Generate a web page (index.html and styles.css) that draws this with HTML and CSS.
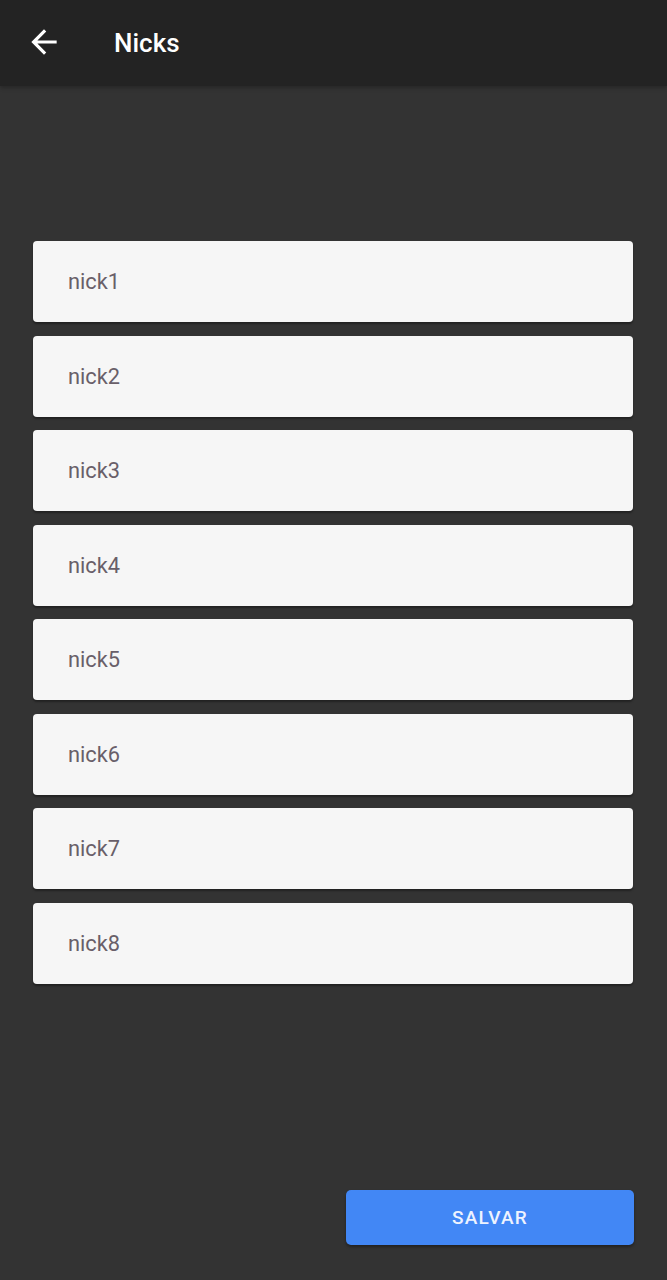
FILE: index.html
```html
<!DOCTYPE html>
<html>
<head>
<meta charset="utf-8">
<link rel="stylesheet" href="styles.css">
</head>
<body>
<div class="app">
  <header class="topbar">
    <button class="back" aria-label="Voltar">
      <svg width="38" height="38" viewBox="0 0 24 24"><path d="M20 11H7.83l5.59-5.59L12 4l-8 8 8 8 1.41-1.41L7.83 13H20v-2z" fill="#fff"/></svg>
    </button>
    <h1 class="title">Nicks</h1>
  </header>
  <main class="content">
    <ul class="list">
      <li class="field">nick1</li>
      <li class="field">nick2</li>
      <li class="field">nick3</li>
      <li class="field">nick4</li>
      <li class="field">nick5</li>
      <li class="field">nick6</li>
      <li class="field">nick7</li>
      <li class="field">nick8</li>
    </ul>
    <div class="actions">
      <button class="save">SALVAR</button>
    </div>
  </main>
</div>
</body>
</html>
```
FILE: styles.css
```css
* { box-sizing: border-box; }
html, body { margin: 0; padding: 0; }
body {
  background: #333333;
  font-family: Roboto, "Noto Sans", sans-serif;
  width: 667px;
  height: 1280px;
  overflow: hidden;
}
.app {
  display: flex;
  flex-direction: column;
  height: 1280px;
}
.topbar {
  height: 86px;
  background: #232323;
  display: flex;
  align-items: center;
  padding-left: 25px;
  box-shadow: 0 2px 4px rgba(0,0,0,0.25);
  flex-shrink: 0;
}
.back {
  background: none;
  border: 0;
  padding: 0;
  width: 38px;
  height: 38px;
  display: flex;
  margin-top: -3px;
}
.title {
  margin: 0 0 0 51px;
  color: #ffffff;
  font-size: 26px;
  font-weight: 500;
  margin-top: -1px;
}
.content {
  flex: 1;
  display: flex;
  flex-direction: column;
  padding: 155px 34px 35px 33px;
}
.list {
  list-style: none;
  margin: 0;
  padding: 0;
  display: flex;
  flex-direction: column;
  gap: 13.5px;
}
.field {
  height: 81px;
  background: #f6f6f6;
  border-radius: 4px;
  box-shadow: 0 2px 2px rgba(0,0,0,0.35);
  color: #695f69;
  font-size: 21.8px;
  padding-left: 35px;
  display: flex;
  align-items: center;
}
.actions {
  margin-top: auto;
  display: flex;
  justify-content: flex-end;
}
.save {
  width: 288px;
  height: 55px;
  margin-right: -1px;
  background: #4287f5;
  border: 0;
  border-radius: 5px;
  color: #eef3ff;
  font-family: Roboto, sans-serif;
  font-weight: 500;
  font-size: 19px;
  letter-spacing: 1.2px;
  box-shadow: 0 2px 3px rgba(0,0,0,0.35);
}
```
